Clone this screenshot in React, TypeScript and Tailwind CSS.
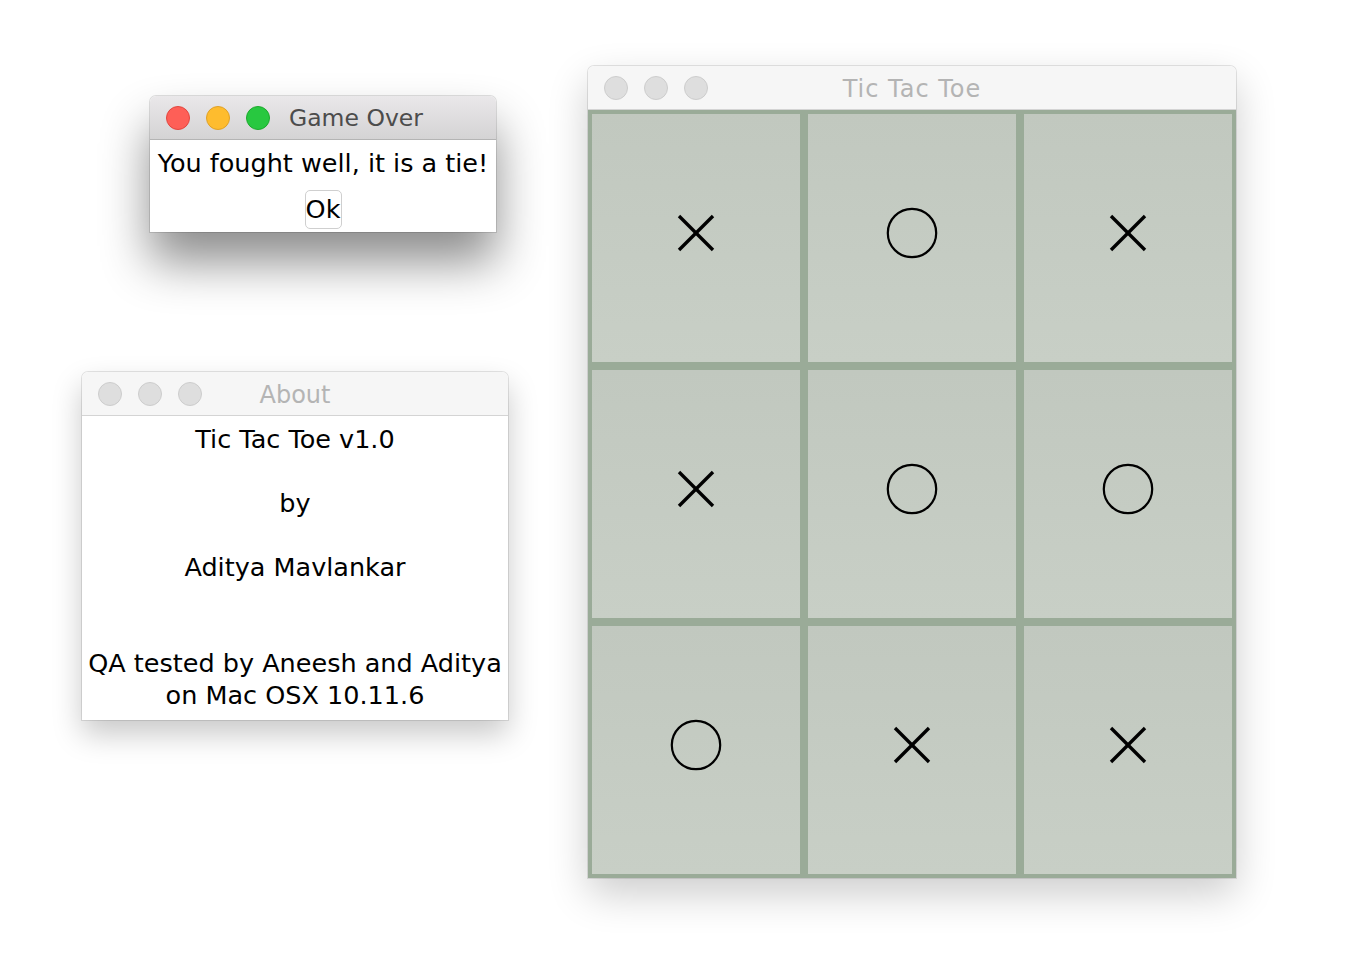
import React from 'react';

const font = { fontFamily: '"DejaVu Sans", "Liberation Sans", sans-serif' };

type Light = 'active' | 'inactive';

function TrafficLights({ mode }: { mode: Light }) {
  const colors =
    mode === 'active'
      ? [
          'bg-[#fe5f57] border-[#e2463f]',
          'bg-[#febc2e] border-[#e0a127]',
          'bg-[#28c840] border-[#1caa2c]',
        ]
      : [
          'bg-[#dedede] border-[#cdcdcd]',
          'bg-[#dedede] border-[#cdcdcd]',
          'bg-[#dedede] border-[#cdcdcd]',
        ];
  return (
    <div className="flex items-center gap-4">
      {colors.map((c, i) => (
        <span key={i} className={`block w-6 h-6 rounded-full border ${c}`} />
      ))}
    </div>
  );
}

function TitleBar({ title, mode, offset, wide }: { title: string; mode: Light; offset?: boolean; wide?: boolean }) {
  const active = mode === 'active';
  return (
    <div
      className={`relative flex items-center h-[44px] px-4 rounded-t-[6px] border-b ${
        active
          ? 'bg-gradient-to-b from-[#eae8ea] to-[#d4d3d4] border-[#b4b4b4]'
          : 'bg-[#f6f6f6] border-[#d4d4d4]'
      }`}
    >
      <TrafficLights mode={mode} />
      {offset ? (
        <span className="ml-[19px] pt-[3px] text-[23.5px] text-[#4c4c4c] leading-none">{title}</span>
      ) : (
        <span
          className={`absolute inset-0 pt-[3px] flex items-center justify-center text-[24px] text-[#b4b4b4] leading-none ${
            wide ? 'tracking-[1px]' : ''
          }`}
        >
          {title}
        </span>
      )}
    </div>
  );
}

function XMark() {
  return (
    <svg width="38" height="38" viewBox="0 0 38 38">
      <line x1="2" y1="2" x2="36" y2="36" stroke="#000" strokeWidth="3.4" />
      <line x1="36" y1="2" x2="2" y2="36" stroke="#000" strokeWidth="3.4" />
    </svg>
  );
}

function OMark() {
  return (
    <svg width="52" height="52" viewBox="0 0 52 52">
      <circle cx="26" cy="26" r="24.2" fill="none" stroke="#000" strokeWidth="2.2" />
    </svg>
  );
}

const board = ['X', 'O', 'X', 'X', 'O', 'O', 'O', 'X', 'X'];

const aboutLines = [
  'Tic Tac Toe v1.0',
  '',
  'by',
  '',
  'Aditya Mavlankar',
  '',
  '',
  'QA tested by Aneesh and Aditya',
  'on Mac OSX 10.11.6',
];

export default function App() {
  return (
    <div className="relative w-[1356px] h-[972px] bg-white overflow-hidden" style={font}>
      {/* Game Over dialog */}
      <div className="absolute left-[150px] top-[96px] w-[346px] rounded-t-[6px] bg-white shadow-[0_30px_48px_rgba(0,0,0,0.45),0_0_0_1px_rgba(0,0,0,0.12)]">
        <TitleBar title="Game Over" mode="active" offset />
        <div className="flex flex-col items-center pt-[7px] h-[92px] text-black">
          <div className="text-[25.5px] leading-[32px] whitespace-nowrap">You fought well, it is a tie!</div>
          <button className="mt-[11px] w-[37px] h-[39px] rounded-[5px] border border-[#cfcfcf] bg-white text-[25.5px] leading-none flex items-center justify-center">
            Ok
          </button>
        </div>
      </div>

      {/* About window */}
      <div className="absolute left-[82px] top-[372px] w-[426px] rounded-t-[6px] bg-white shadow-[0_14px_30px_rgba(0,0,0,0.22),0_0_0_1px_rgba(0,0,0,0.1)]">
        <TitleBar title="About" mode="inactive" />
        <div className="pt-[7px] h-[304px] text-black text-center text-[25.5px]">
          {aboutLines.map((l, i) => (
            <div key={i} className="h-[32px] leading-[32px] whitespace-nowrap">
              {l}
            </div>
          ))}
        </div>
      </div>

      {/* Main board window */}
      <div className="absolute left-[588px] top-[66px] w-[648px] rounded-t-[6px] bg-white shadow-[0_16px_40px_rgba(0,0,0,0.2),0_0_0_1px_rgba(0,0,0,0.1)]">
        <TitleBar title="Tic Tac Toe" mode="inactive" wide />
        <div className="grid grid-cols-3">
          {board.map((v, i) => (
            <div
              key={i}
              className="h-[256px] border-4 border-[#9aab98] bg-gradient-to-b from-[#c1c8bf] to-[#c8cfc6] flex items-center justify-center pb-[10px]"
            >
              {v === 'X' ? <XMark /> : <OMark />}
            </div>
          ))}
        </div>
      </div>
    </div>
  );
}
